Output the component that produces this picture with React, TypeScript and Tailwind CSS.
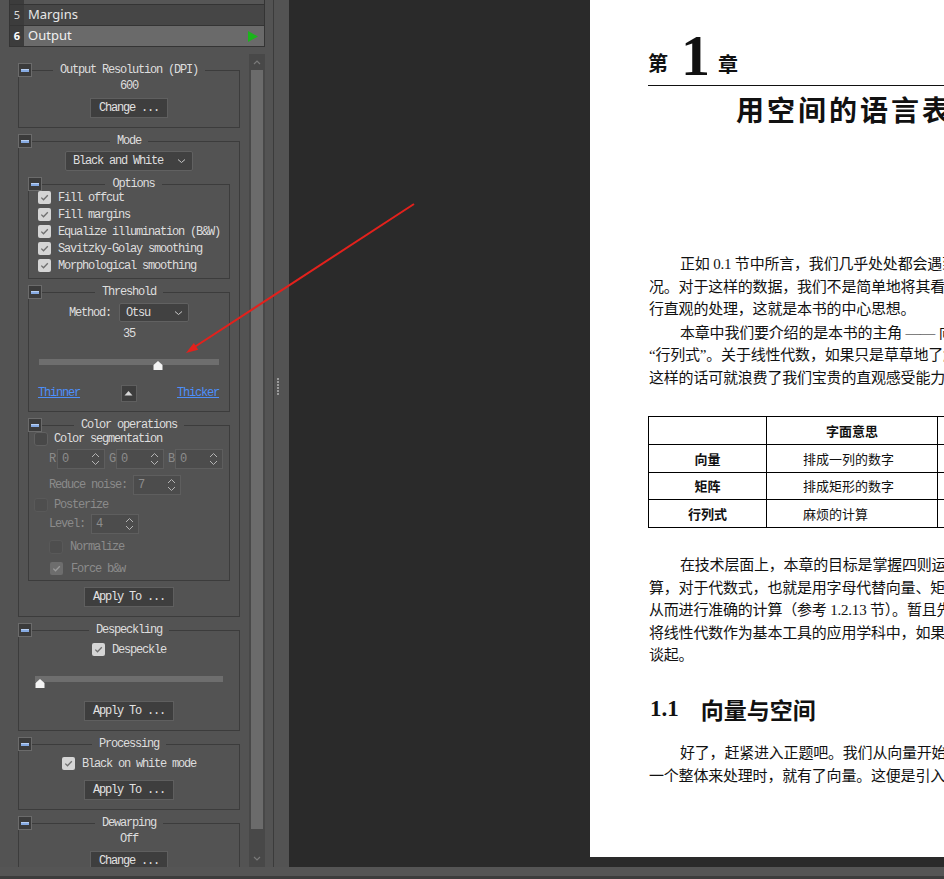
import React from "react";

const MONO = "font-['Liberation_Mono',monospace] text-[12px] tracking-[-1.2px]";
const CJK = "font-['Noto_Sans_CJK_SC',sans-serif]";
const SERIF = "font-['Liberation_Serif','Noto_Sans_CJK_SC',serif]";

function Collapse() {
  return (
    <div className="absolute left-0 top-0 w-[14px] h-[14px] bg-[#3b3b3b] border border-[#6b6b6b] flex items-center justify-center">
      <div className="w-[8px] h-[3px] bg-[#86aae2] border-t border-[#b7cff3]" />
    </div>
  );
}

function Group({
  title,
  children,
  className = "",
  pad = "",
}: {
  title: string;
  children?: React.ReactNode;
  className?: string;
  pad?: string;
}) {
  return (
    <div className={`relative ${className}`}>
      <fieldset className={`border border-[#3c3c3c] ${pad}`}>
        <legend className="mx-auto px-[7px] h-[14px] leading-[14px] text-[#dedede] whitespace-nowrap">{title}</legend>
        {children}
      </fieldset>
      <Collapse />
    </div>
  );
}

function Check({ checked, disabled }: { checked?: boolean; disabled?: boolean }) {
  if (checked)
    return (
      <div
        className={`w-[13px] h-[13px] shrink-0 rounded-[2px] flex items-center justify-center ${
          disabled ? "bg-[#6d6d6d]" : "bg-[#d5d5d5]"
        }`}
      >
        <svg width="9" height="9" viewBox="0 0 9 9">
          <polyline
            points="1.3,4.6 3.5,6.8 7.8,2.2"
            fill="none"
            stroke={disabled ? "#9b9b9b" : "#6f6f6f"}
            strokeWidth="1.3"
          />
        </svg>
      </div>
    );
  return (
    <div
      className={`w-[14px] h-[14px] shrink-0 rounded-[3px] border ${
        disabled ? "border-[#595959] bg-[#4e4e4e]" : "border-[#606060] bg-[#484848]"
      }`}
    />
  );
}

function Spin({ value }: { value: string }) {
  return (
    <div className="h-[20px] w-[48px] shrink-0 border border-[#5e5e5e] bg-[#4c4c4c] flex items-center justify-between pl-[4px] pr-[4px] text-[#8d8d8d]">
      <span>{value}</span>
      <svg width="9" height="14" viewBox="0 0 9 14">
        <polyline points="1,5 4.5,1.5 8,5" fill="none" stroke="#b4b4b4" strokeWidth="1" />
        <polyline points="1,9 4.5,12.5 8,9" fill="none" stroke="#b4b4b4" strokeWidth="1" />
      </svg>
    </div>
  );
}

function Btn({ label, w }: { label: string; w: string }) {
  return (
    <div
      className={`h-[20px] ${w} mx-auto bg-[#3e3e3e] border border-[#5f5f5f] flex items-center justify-center text-[#e2e2e2] whitespace-nowrap`}
    >
      {label}
    </div>
  );
}

function Chevron() {
  return (
    <svg width="9" height="6" viewBox="0 0 9 6">
      <polyline points="1,1.5 4.5,4.5 8,1.5" fill="none" stroke="#c8c8c8" strokeWidth="1" />
    </svg>
  );
}

function Handle() {
  return (
    <svg width="10" height="9" viewBox="0 0 10 9">
      <path d="M5 0 L9.5 4 L9.5 9 L0.5 9 L0.5 4 Z" fill="#f4f4f4" />
    </svg>
  );
}

function CheckRow({ label, checked, disabled }: { label: string; checked?: boolean; disabled?: boolean }) {
  return (
    <div className="h-[17px] flex items-center gap-[7px] whitespace-nowrap">
      <Check checked={checked} disabled={disabled} />
      <span className={disabled ? "text-[#8b8b8b]" : "text-[#dedede]"}>{label}</span>
    </div>
  );
}

function LeftPanel() {
  return (
    <div className="w-[273px] h-full flex flex-col bg-[#535353]">
      {/* stage list */}
      <div className="ml-[9px] w-[256px] border-x border-b border-[#343434] bg-[#343434] flex flex-col gap-px font-['Noto_Sans','Open_Sans',sans-serif]">
        <div className="h-[4px] flex">
          <div className="w-[14px] bg-[#3c3c3c]" />
          <div className="flex-1 bg-[#565656]" />
        </div>
        <div className="h-[20px] flex">
          <div className="w-[14px] bg-[#3c3c3c] text-[11px] text-[#dcdcdc] flex items-center justify-center">5</div>
          <div className="flex-1 bg-[#464646] pl-[4px] text-[13px] text-[#e6e6e6] flex items-center">Margins</div>
        </div>
        <div className="h-[20px] flex">
          <div className="w-[14px] bg-[#3c3c3c] text-[11px] font-bold text-white flex items-center justify-center">6</div>
          <div className="flex-1 bg-[#6a6a6a] pl-[4px] pr-[6px] text-[13px] text-[#f0f0f0] flex items-center justify-between">
            <span>Output</span>
            <svg width="10" height="11" viewBox="0 0 10 11">
              <path d="M0 0 L10 5.5 L0 11 Z" fill="#1bb51b" />
            </svg>
          </div>
        </div>
      </div>

      {/* scroll area */}
      <div className="mt-[7px] ml-[9px] w-[256px] flex-1 flex overflow-hidden">
        <div className={`w-[240px] h-full overflow-hidden pl-[9px] pr-[9px] pt-[9px] ${MONO} text-[#dedede]`}>
          {/* Output Resolution */}
          <Group title="Output Resolution (DPI)" pad="pb-[9px]">
            <div className="mt-[2px] h-[14px] leading-[14px] text-center">600</div>
            <div className="mt-[5px]">
              <Btn label="Change ..." w="w-[78px]" />
            </div>
          </Group>

          {/* Mode */}
          <Group title="Mode" className="mt-[6px]" pad="px-[9px] pb-[9px]">
            <div className="mt-[3px] mx-auto w-[128px] h-[20px] bg-[#414141] border border-[#616161] rounded-[2px] flex items-center justify-between pl-[7px] pr-[6px] whitespace-nowrap">
              <span>Black and White</span>
              <Chevron />
            </div>

            <Group title="Options" className="mt-[6px]" pad="pl-[9px] pb-[4px]">
              <div className="-mt-[2px]">
                <CheckRow label="Fill offcut" checked />
                <CheckRow label="Fill margins" checked />
                <CheckRow label="Equalize illumination (B&W)" checked />
                <CheckRow label="Savitzky-Golay smoothing" checked />
                <CheckRow label="Morphological smoothing" checked />
              </div>
            </Group>

            <Group title="Threshold" className="mt-[6px]" pad="pb-[9px]">
              <div className="mt-[4px] flex items-center justify-center gap-[8px]">
                <span>Method:</span>
                <div className="w-[70px] h-[19px] bg-[#414141] border border-[#616161] rounded-[2px] flex items-center justify-between pl-[6px] pr-[5px]">
                  <span>Otsu</span>
                  <Chevron />
                </div>
              </div>
              <div className="mt-[5px] h-[14px] leading-[14px] text-center">35</div>
              <div className="relative mt-[18px] mx-[10px] h-[6px] bg-[#6e6e6e]">
                <div className="absolute left-[114px] top-[2px]">
                  <Handle />
                </div>
              </div>
              <div className="mt-[19px] pl-[9px] pr-[10px] flex items-center justify-between">
                <span className="text-[#4d8ffa] underline">Thinner</span>
                <div className="w-[16px] h-[17px] bg-[#3d3d3d] border border-[#5f5f5f] flex items-center justify-center">
                  <svg width="9" height="6" viewBox="0 0 9 6">
                    <path d="M0.5 5.5 L4.5 1 L8.5 5.5 Z" fill="#d6d6d6" />
                  </svg>
                </div>
                <span className="text-[#4d8ffa] underline">Thicker</span>
              </div>
            </Group>

            <Group title="Color operations" className="mt-[6px]" pad="pb-[5px]">
              <div className="pl-[5px] flex items-center gap-[6px] h-[14px] whitespace-nowrap">
                <Check />
                <span>Color segmentation</span>
              </div>
              <div className="mt-[3px] pl-[20px] flex items-center text-[#8b8b8b]">
                <span className="w-[8px]">R</span>
                <Spin value="0" />
                <span className="ml-[4px] w-[7px]">G</span>
                <Spin value="0" />
                <span className="ml-[4px] w-[7px]">B</span>
                <Spin value="0" />
              </div>
              <div className="mt-[6px] pl-[20px] flex items-center gap-[6px] text-[#8b8b8b] whitespace-nowrap">
                <span>Reduce noise:</span>
                <Spin value="7" />
              </div>
              <div className="mt-[3px] pl-[5px] flex items-center gap-[6px] h-[14px] text-[#8b8b8b]">
                <Check disabled />
                <span>Posterize</span>
              </div>
              <div className="mt-[2px] pl-[20px] flex items-center gap-[6px] text-[#8b8b8b]">
                <span>Level:</span>
                <Spin value="4" />
              </div>
              <div className="mt-[6px] pl-[20px] flex items-center gap-[7px] h-[14px] text-[#8b8b8b]">
                <Check disabled />
                <span>Normalize</span>
              </div>
              <div className="mt-[8px] pl-[21px] flex items-center gap-[8px] h-[13px] text-[#8b8b8b] whitespace-nowrap">
                <Check checked disabled />
                <span>Force b&amp;w</span>
              </div>
            </Group>

            <div className="mt-[6px]">
              <Btn label="Apply To ..." w="w-[90px]" />
            </div>
          </Group>

          {/* Despeckling */}
          <Group title="Despeckling" className="mt-[6px]" pad="pb-[9px]">
            <div className="mt-[6px] flex items-center justify-center gap-[7px] h-[13px]">
              <Check checked />
              <span>Despeckle</span>
            </div>
            <div className="relative mt-[20px] mx-[16px] h-[6px] bg-[#6e6e6e]">
              <div className="absolute left-0 top-[3px]">
                <Handle />
              </div>
            </div>
            <div className="mt-[19px]">
              <Btn label="Apply To ..." w="w-[90px]" />
            </div>
          </Group>

          {/* Processing */}
          <Group title="Processing" className="mt-[6px]" pad="pb-[9px]">
            <div className="mt-[6px] flex items-center justify-center gap-[7px] h-[13px] whitespace-nowrap">
              <Check checked />
              <span>Black on white mode</span>
            </div>
            <div className="mt-[10px]">
              <Btn label="Apply To ..." w="w-[90px]" />
            </div>
          </Group>

          {/* Dewarping */}
          <Group title="Dewarping" className="mt-[6px]" pad="pb-[9px]">
            <div className="mt-[2px] h-[14px] leading-[14px] text-center">Off</div>
            <div className="mt-[5px]">
              <Btn label="Change ..." w="w-[78px]" />
            </div>
          </Group>
        </div>

        {/* scrollbar */}
        <div className="w-[16px] h-full bg-[#484848] flex flex-col items-center">
          <div className="h-[16px] flex items-center justify-center">
            <svg width="8" height="5" viewBox="0 0 8 5">
              <polyline points="1,4 4,1 7,4" fill="none" stroke="#7a7a7a" strokeWidth="1.2" />
            </svg>
          </div>
          <div className="w-[12px] h-[759px] bg-[#6b6b6b]" />
          <div className="flex-1" />
          <div className="h-[18px] flex items-center justify-center">
            <svg width="8" height="5" viewBox="0 0 8 5">
              <polyline points="1,1 4,4 7,1" fill="none" stroke="#7a7a7a" strokeWidth="1.2" />
            </svg>
          </div>
        </div>
      </div>
    </div>
  );
}

function Splitter() {
  return (
    <div className="w-[15px] h-full bg-[#535353] pt-[378px] pl-[3px] flex flex-col gap-px">
      {[0, 1, 2, 3, 4, 5].map((i) => (
        <div key={i} className="w-[2px] h-[2px] bg-[#9a9a9a]" />
      ))}
    </div>
  );
}

function Line({ children, indent }: { children: React.ReactNode; indent?: boolean }) {
  return (
    <div className={`whitespace-nowrap h-[22.5px] leading-[22.5px] ${indent ? "pl-[31px]" : ""}`}>{children}</div>
  );
}

function Page() {
  const cell = "border-[1.5px] border-black";
  return (
    <div className={`ml-[301px] w-[640px] h-[857px] bg-white text-[#111] pl-[58px] ${SERIF} overflow-hidden`}>
      {/* chapter header */}
      <div className="h-[86px] border-b border-[#111] w-[600px]">
        <div className="h-[80px] flex items-end">
          <span className={`${CJK} font-bold text-[20px] leading-none mb-[7px]`}>第</span>
          <span className="ml-[13px] font-['Liberation_Serif',serif] font-bold text-[58px] leading-[48px]">1</span>
          <span className={`ml-[8px] ${CJK} font-bold text-[20px] leading-none mb-[6px]`}>章</span>
        </div>
      </div>
      <div className={`mt-[9px] ml-[88px] ${CJK} font-bold text-[28px] leading-none tracking-[3px] whitespace-nowrap`}>
        用空间的语言表达矩阵
      </div>

      <div className="mt-[130px] ml-[1px] text-[15px] tracking-[-0.2px]">
        <Line indent>正如 0.1 节中所言，我们几乎处处都会遇到将多个数值排成一列的情</Line>
        <Line>况。对于这样的数据，我们不是简单地将其看作一堆数值，而是将其视为空间中的点来进</Line>
        <Line>行直观的处理，这就是本书的中心思想。</Line>
      </div>
      <div className="mt-[1px] ml-[1px] text-[15px] tracking-[-0.2px]">
        <Line indent>本章中我们要介绍的是本书的主角 —— 向量、矩阵以及</Line>
        <Line>“行列式”。关于线性代数，如果只是草草地了解一下计算方法，</Line>
        <Line>这样的话可就浪费了我们宝贵的直观感受能力了。</Line>
      </div>

      <table className={`mt-[27px] border-collapse text-[13px] ${CJK}`}>
        <tbody>
          <tr className="h-[28px]">
            <td className={`w-[118px] ${cell}`}></td>
            <td className={`w-[171px] ${cell} text-center font-bold`}>字面意思</td>
            <td className={`w-[200px] ${cell} text-center font-bold`}>几何意义</td>
          </tr>
          <tr className="h-[28px]">
            <td className={`${cell} text-center font-bold`}>向量</td>
            <td className={`${cell} pl-[36px]`}>排成一列的数字</td>
            <td className={`${cell} text-center`}>箭头或点</td>
          </tr>
          <tr className="h-[27px]">
            <td className={`${cell} text-center font-bold`}>矩阵</td>
            <td className={`${cell} pl-[36px]`}>排成矩形的数字</td>
            <td className={`${cell} text-center`}>空间到空间的映射</td>
          </tr>
          <tr className="h-[28px]">
            <td className={`${cell} text-center font-bold`}>行列式</td>
            <td className={`${cell} pl-[36px]`}>麻烦的计算</td>
            <td className={`${cell} text-center`}>上述映射对应的体积扩大率</td>
          </tr>
        </tbody>
      </table>

      <div className="mt-[26px] ml-[1px] text-[15px] tracking-[-0.2px]">
        <Line indent>在技术层面上，本章的目标是掌握四则运算、乘法</Line>
        <Line>算，对于代数式，也就是用字母代替向量、矩阵进行计算，</Line>
        <Line>从而进行准确的计算（参考 1.2.13 节）。暂且先不管这些，</Line>
        <Line>将线性代数作为基本工具的应用学科中，如果不</Line>
        <Line>谈起。</Line>
      </div>

      <div className="mt-[27.5px] ml-[2px] h-[30px] flex items-center whitespace-nowrap">
        <span className="font-['Liberation_Serif',serif] font-bold text-[23px]">1.1</span>
        <span className={`ml-[22px] ${CJK} font-bold text-[23px]`}>向量与空间</span>
      </div>

      <div className="mt-[18px] ml-[1px] text-[15px] tracking-[-0.2px]">
        <Line indent>好了，赶紧进入正题吧。我们从向量开始讲起</Line>
        <Line>一个整体来处理时，就有了向量。这便是引入</Line>
      </div>
    </div>
  );
}

export default function App() {
  return (
    <div className="relative w-[944px] h-[879px] overflow-hidden bg-[#535353] flex flex-col">
      <div className="h-[867px] flex">
        <LeftPanel />
        <div className="w-px h-full bg-[#3b3b3b]" />
        <Splitter />
        <div className="flex-1 h-full bg-[#2a2a2a] overflow-hidden">
          <Page />
        </div>
      </div>
      <div className="h-[9px] bg-[#555555]" />
      <div className="flex-1 bg-[#3c3c3c]" />

      <svg className="absolute inset-0 pointer-events-none" width="944" height="879" viewBox="0 0 944 879">
        <line x1="414" y1="204" x2="193" y2="348" stroke="#e3211c" strokeWidth="2" />
        <polygon points="186,353 198.2,349.8 193.8,343.1" fill="#e3211c" />
      </svg>
    </div>
  );
}
